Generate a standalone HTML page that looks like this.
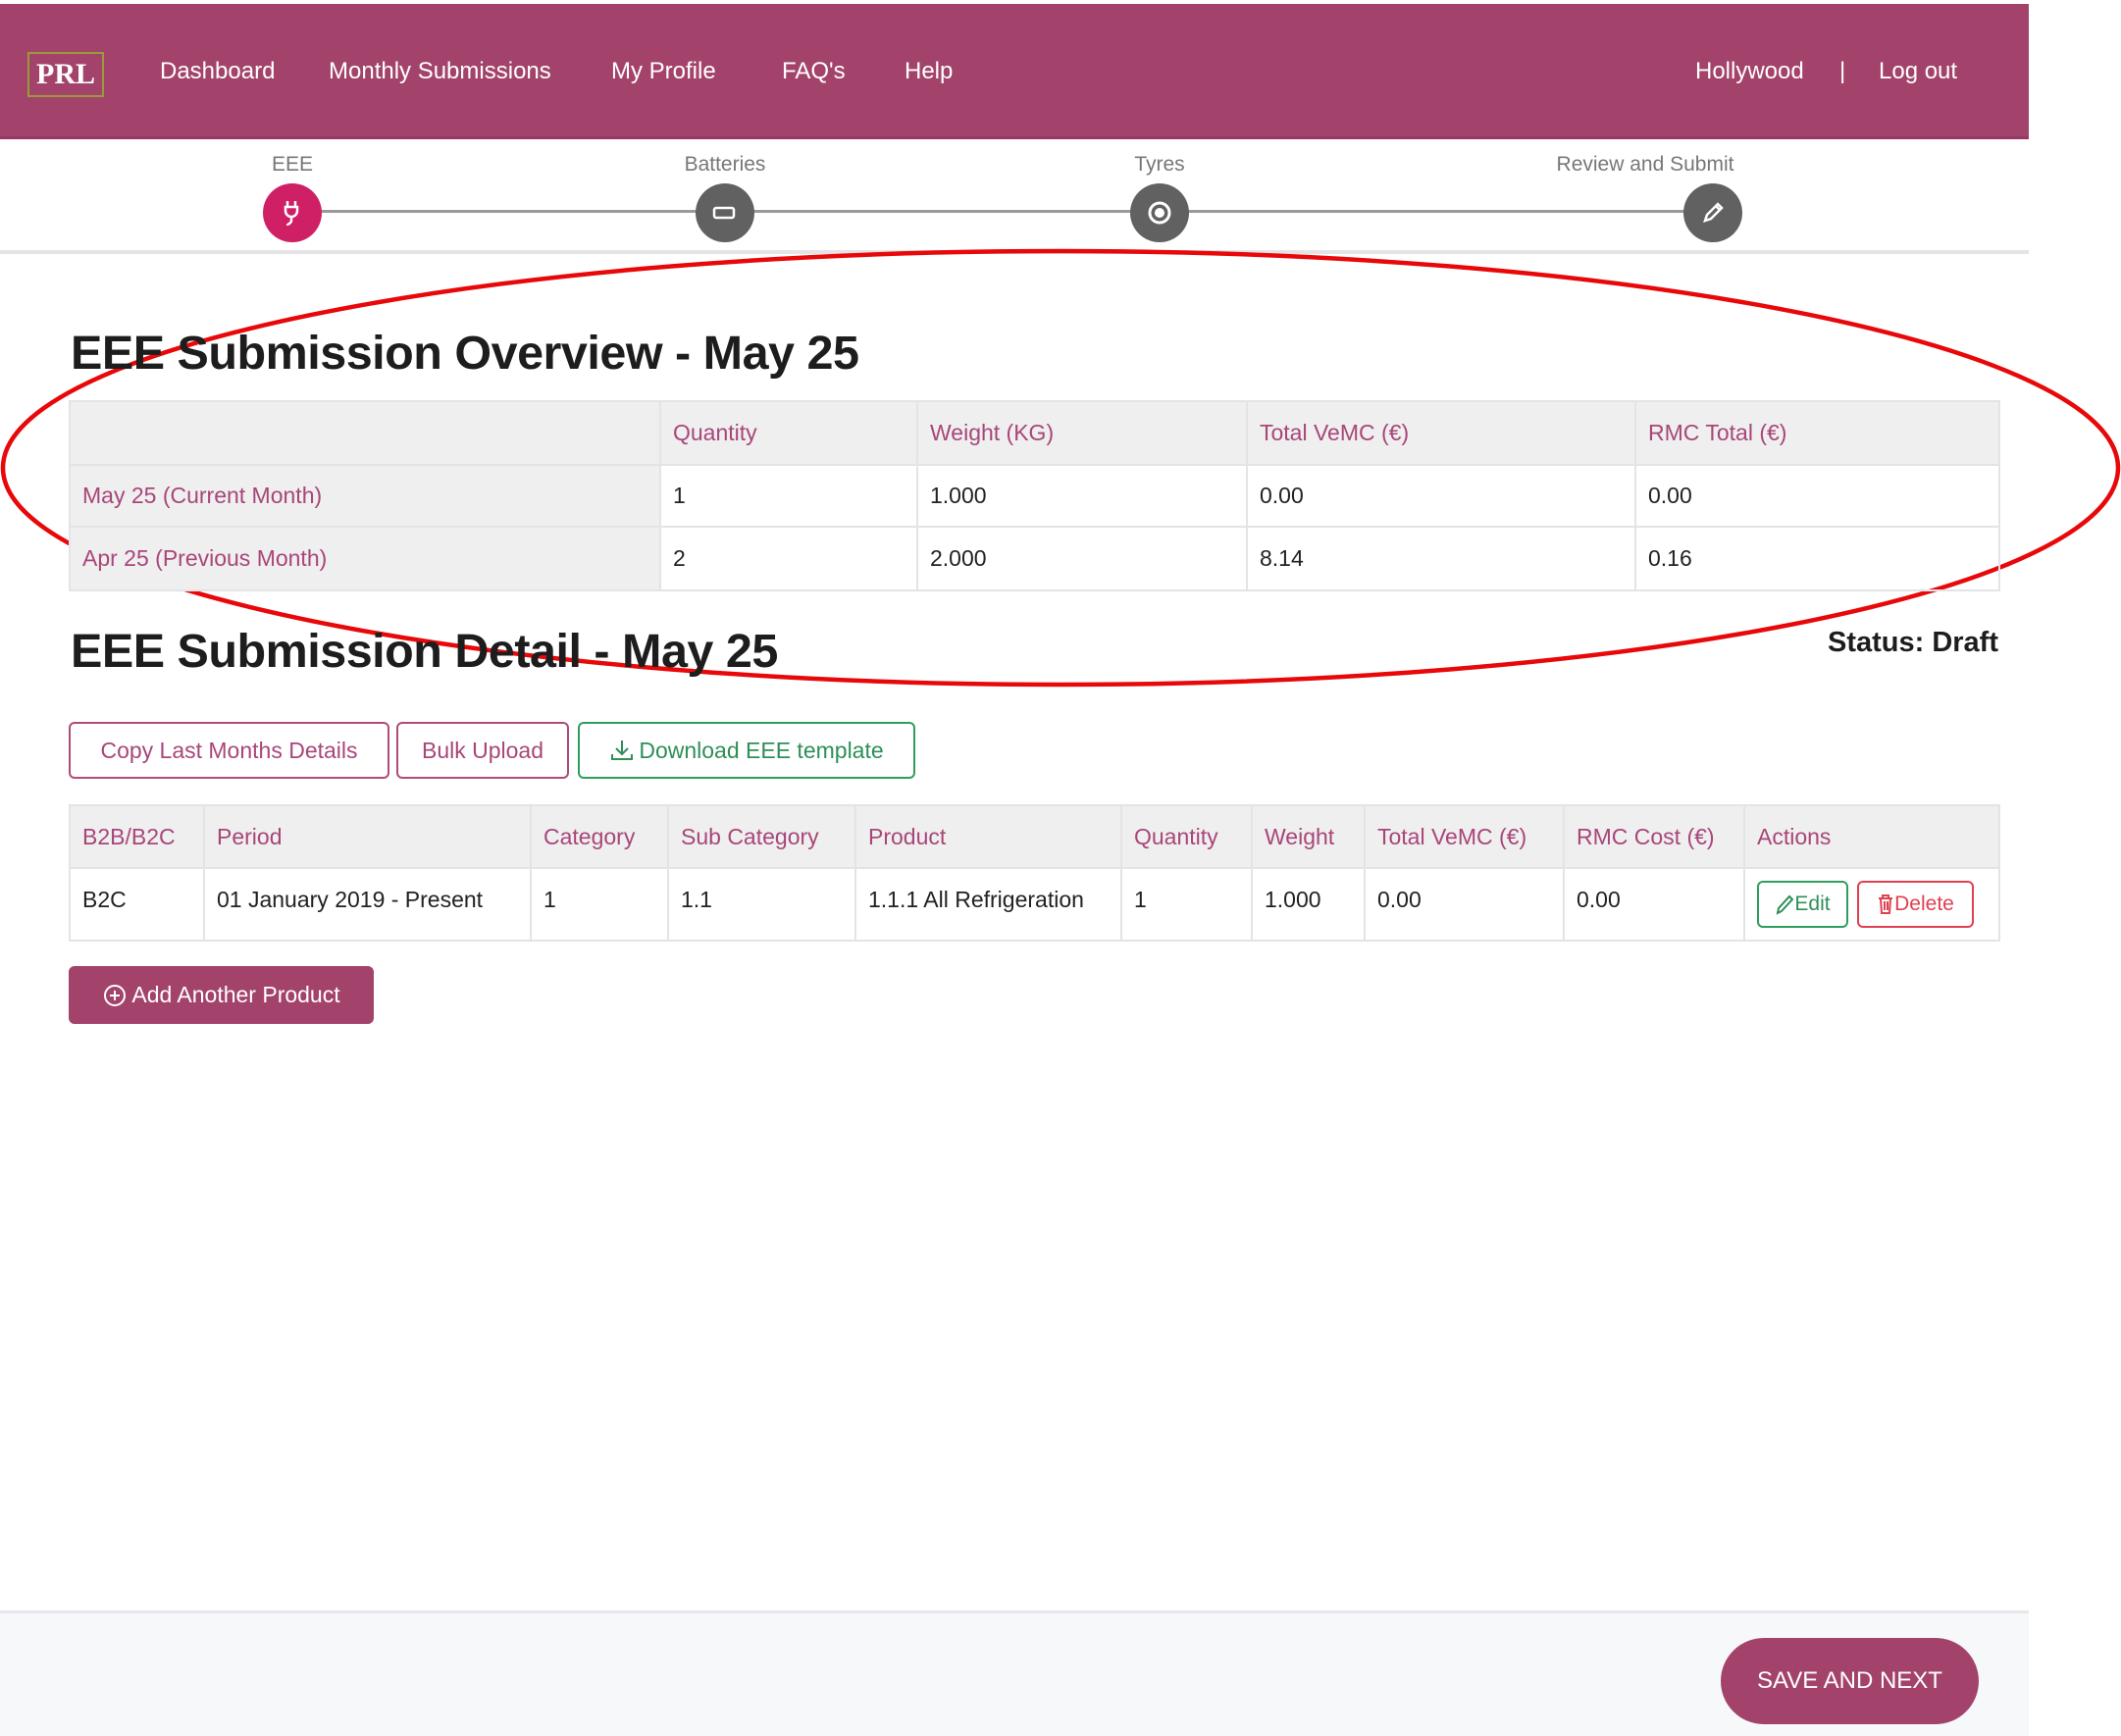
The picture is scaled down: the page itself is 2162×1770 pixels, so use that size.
<!DOCTYPE html>
<html><head><meta charset="utf-8"><style>
*{box-sizing:border-box;margin:0;padding:0}
body{width:2162px;height:1770px;position:relative;background:#fff;font-family:"Liberation Sans",sans-serif;overflow:hidden;color:#222}
.a{position:absolute}
.hdr{left:0;top:4px;width:2068px;height:138px;background:#a3436b;border-bottom:3px solid #953861}
.nav{color:#fff;font-size:24px;top:59px;white-space:nowrap}
.steps{left:0;top:142px;width:2068px;height:117px;background:#fff;border-bottom:4px solid #e4e4e6}
.lbl{color:#777;font-size:21px;top:156px;transform:translateX(-50%);white-space:nowrap}
.line{left:298px;top:214px;width:1448px;height:3px;background:#9a9a9a}
.c{width:60px;height:60px;border-radius:50%;background:#616161;top:187px;margin-left:-30px;display:flex;align-items:center;justify-content:center}
h1{position:absolute;font-size:48.5px;font-weight:bold;color:#1d1d1d;white-space:nowrap;letter-spacing:-0.5px}
table{position:absolute;border-collapse:collapse;table-layout:fixed;font-size:23px}
td,th{border:2px solid #e2e4e8;text-align:left;font-weight:normal;padding:0 12px;white-space:nowrap;overflow:hidden}
th{background:#efefef;color:#a8467a}
.p{color:#a8467a}
.btn{border:2px solid #b04a7a;border-radius:6px;color:#a8467a;font-size:23px;display:flex;align-items:center;justify-content:center;white-space:nowrap}
</style></head><body>
<div class="a hdr"></div>
<div class="a" style="left:28px;top:53px;width:78px;height:46px;border:2px solid #9a9a3a;color:#fff;font-family:'Liberation Serif',serif;font-weight:bold;font-size:30px;display:flex;align-items:center;justify-content:center">PRL</div>
<div class="a nav" style="left:163px">Dashboard</div>
<div class="a nav" style="left:335px">Monthly Submissions</div>
<div class="a nav" style="left:623px">My Profile</div>
<div class="a nav" style="left:797px">FAQ's</div>
<div class="a nav" style="left:922px">Help</div>
<div class="a nav" style="left:1728px">Hollywood</div>
<div class="a nav" style="left:1875px">|</div>
<div class="a nav" style="left:1915px">Log out</div>

<div class="a steps"></div>
<div class="a lbl" style="left:298px">EEE</div>
<div class="a lbl" style="left:739px">Batteries</div>
<div class="a lbl" style="left:1182px">Tyres</div>
<div class="a lbl" style="left:1677px">Review and Submit</div>
<div class="a line"></div>
<div class="a c" style="left:298px;background:#cf1f65"><svg width="26" height="30" viewBox="0 0 26 30" fill="none" stroke="#fff" stroke-width="2.5"><path d="M8 3v6M16 3v6M6 9h12v4a6 6 0 0 1-12 0zM12 19v4c0 3-4 3-4 5"/></svg></div>
<div class="a c" style="left:739px"><svg width="26" height="16"><rect x="2" y="3" width="20" height="10" rx="2" fill="none" stroke="#fff" stroke-width="2.5"/></svg></div>
<div class="a c" style="left:1182px"><svg width="28" height="28"><circle cx="14" cy="14" r="10" fill="none" stroke="#fff" stroke-width="3"/><circle cx="14" cy="14" r="5" fill="#fff"/></svg></div>
<div class="a c" style="left:1746px"><svg width="28" height="28" fill="none" stroke="#fff" stroke-width="2.5"><path d="M6 22l2-6L19 5l4 4-11 11zM17 7l4 4"/></svg></div>

<svg class="a" style="left:0;top:0" width="2162" height="760"><ellipse cx="1081" cy="477" rx="1078" ry="221" fill="none" stroke="#e8080a" stroke-width="4.5"/></svg>

<h1 style="left:72px;top:332px">EEE Submission Overview - May 25</h1>
<table style="left:70px;top:408px;width:1967px">
<colgroup><col style="width:602px"><col style="width:262px"><col style="width:336px"><col style="width:396px"><col style="width:371px"></colgroup>
<tr style="height:65px"><th></th><th>Quantity</th><th>Weight (KG)</th><th>Total VeMC (€)</th><th>RMC Total (€)</th></tr>
<tr style="height:63px"><td class="p" style="background:#efefef">May 25 (Current Month)</td><td>1</td><td>1.000</td><td>0.00</td><td>0.00</td></tr>
<tr style="height:65px"><td class="p" style="background:#efefef">Apr 25 (Previous Month)</td><td>2</td><td>2.000</td><td>8.14</td><td>0.16</td></tr>
</table>

<h1 style="left:72px;top:636px">EEE Submission Detail - May 25</h1>
<div class="a" style="right:125px;top:639px;font-size:29px;font-weight:bold;color:#1d1d1d">Status: Draft</div>

<div class="a btn" style="left:70px;top:736px;width:327px;height:58px">Copy Last Months Details</div>
<div class="a btn" style="left:404px;top:736px;width:176px;height:58px">Bulk Upload</div>
<div class="a btn" style="left:589px;top:736px;width:344px;height:58px;border-color:#2e9e5e;color:#2e8f58"><svg width="26" height="26" fill="none" stroke="#2e8f58" stroke-width="2" style="margin-right:4px"><path d="M13 3v14M7 11l6 6 6-6M3 17v5h20v-5"/></svg>Download EEE template</div>

<table style="left:70px;top:820px;width:1967px">
<colgroup><col style="width:137px"><col style="width:333px"><col style="width:140px"><col style="width:191px"><col style="width:271px"><col style="width:133px"><col style="width:115px"><col style="width:203px"><col style="width:184px"><col style="width:260px"></colgroup>
<tr style="height:64px"><th>B2B/B2C</th><th>Period</th><th>Category</th><th>Sub Category</th><th>Product</th><th>Quantity</th><th>Weight</th><th>Total VeMC (€)</th><th>RMC Cost (€)</th><th>Actions</th></tr>
<tr style="height:74px;vertical-align:top"><td style="padding-top:18px">B2C</td><td style="padding-top:18px">01 January 2019 - Present</td><td style="padding-top:18px">1</td><td style="padding-top:18px">1.1</td><td style="padding-top:18px">1.1.1 All Refrigeration</td><td style="padding-top:18px">1</td><td style="padding-top:18px">1.000</td><td style="padding-top:18px">0.00</td><td style="padding-top:18px">0.00</td><td></td></tr>
</table>
<div class="a btn" style="left:1791px;top:898px;width:93px;height:48px;border-color:#2e9e5e;color:#2e8f58;font-size:21px"><svg width="20" height="22" fill="none" stroke="#2e8f58" stroke-width="2"><path d="M3 20l1-5L15 3l3 3L7 18z"/></svg>Edit</div>
<div class="a btn" style="left:1893px;top:898px;width:119px;height:48px;border-color:#e04050;color:#e04050;font-size:21px"><svg width="18" height="22" fill="none" stroke="#e04050" stroke-width="2"><path d="M2 5h14M6 5V2h6v3M4 5l1 15h8l1-15M8 8v9M11 8v9"/></svg>Delete</div>

<div class="a btn" style="left:70px;top:985px;width:311px;height:59px;background:#a3436b;border-color:#a3436b;color:#fff"><svg width="26" height="26" fill="none" stroke="#fff" stroke-width="2" style="margin-right:4px"><circle cx="13" cy="13" r="10"/><path d="M13 8v10M8 13h10"/></svg>Add Another Product</div>

<div class="a" style="left:0;top:1642px;width:2068px;height:128px;background:#f7f8fa;border-top:3px solid #e6e7ea"></div>
<div class="a" style="left:1754px;top:1670px;width:263px;height:88px;border-radius:44px;background:#a3436b;color:#fff;font-size:24px;display:flex;align-items:center;justify-content:center">SAVE AND NEXT</div>
</body></html>
